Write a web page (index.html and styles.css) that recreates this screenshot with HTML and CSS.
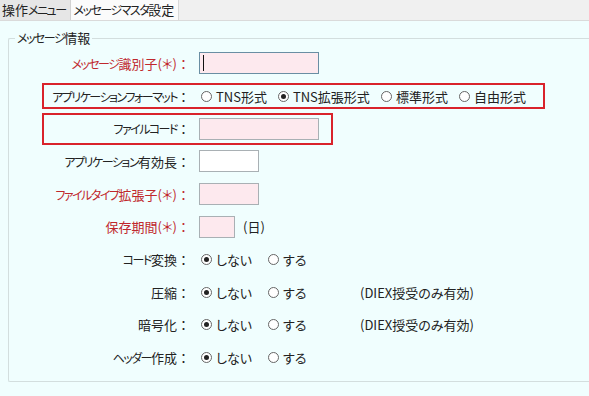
FILE: index.html
```html
<!DOCTYPE html>
<html lang="ja">
<head>
    <meta charset="UTF-8">
    <title>メッセージマスタ設定</title>
    <link rel="stylesheet" href="styles.css">
</head>
<body>
    <div class="tabs">
        <div class="tab">操作<span class="kana">メニュー</span></div>
        <div class="tab active"><span class="kana">メッセージマスタ</span>設定</div>
    </div>

    <div class="panel">
        <fieldset class="box">
            <legend><span class="kana">メッセージ</span>情報</legend>

            <div class="row">
                <label class="lbl req"><span class="kana">メッセージ</span>識別子(＊)<span class="colon">：</span></label>
                <span class="focus"><input type="text" class="txt pink w120 hot"></span>
            </div>

            <!-- annotated rows (red frame) -->
            <div class="row mark mark-fmt">
                <label class="lbl"><span class="kana">アプリケーションフォーマット</span><span class="colon">：</span></label>
                <div class="opts">
                    <label class="opt"><input type="radio" name="fmt">TNS形式</label>
                    <label class="opt"><input type="radio" name="fmt" checked>TNS拡張形式</label>
                    <label class="opt"><input type="radio" name="fmt">標準形式</label>
                    <label class="opt"><input type="radio" name="fmt">自由形式</label>
                </div>
            </div>

            <div class="row mark mark-code">
                <label class="lbl"><span class="kana">ファイルコード</span><span class="colon">：</span></label>
                <input type="text" class="txt pink w120">
            </div>

            <div class="row">
                <label class="lbl"><span class="kana">アプリケーション</span>有効長<span class="colon">：</span></label>
                <input type="text" class="txt w60">
            </div>

            <div class="row">
                <label class="lbl req"><span class="kana">ファイルタイプ</span>拡張子(＊)<span class="colon">：</span></label>
                <input type="text" class="txt pink w60">
            </div>

            <div class="row">
                <label class="lbl req">保存期間(＊)<span class="colon">：</span></label>
                <input type="text" class="txt pink w36">
                <span class="unit">(日)</span>
            </div>

            <div class="row">
                <label class="lbl"><span class="kana">コード</span>変換<span class="colon">：</span></label>
                <div class="opts yn">
                    <label class="opt"><input type="radio" name="conv" checked>しない</label>
                    <label class="opt"><input type="radio" name="conv">する</label>
                </div>
            </div>

            <div class="row">
                <label class="lbl">圧縮<span class="colon">：</span></label>
                <div class="opts yn">
                    <label class="opt"><input type="radio" name="zip" checked>しない</label>
                    <label class="opt"><input type="radio" name="zip">する</label>
                </div>
                <span class="note">(DIEX授受のみ有効)</span>
            </div>

            <div class="row">
                <label class="lbl">暗号化<span class="colon">：</span></label>
                <div class="opts yn">
                    <label class="opt"><input type="radio" name="enc" checked>しない</label>
                    <label class="opt"><input type="radio" name="enc">する</label>
                </div>
                <span class="note">(DIEX授受のみ有効)</span>
            </div>

            <div class="row">
                <label class="lbl"><span class="kana">ヘッダー</span>作成<span class="colon">：</span></label>
                <div class="opts yn">
                    <label class="opt"><input type="radio" name="hdr" checked>しない</label>
                    <label class="opt"><input type="radio" name="hdr">する</label>
                </div>
            </div>
        </fieldset>
    </div>
</body>
</html>
```

FILE: styles.css
```css
html, body {
    margin: 0;
    height: 100%;
}
body {
    font-family: "Noto Sans CJK JP", "Noto Sans", sans-serif;
    font-size: 13px;
    font-feature-settings: "palt";
    color: #222;
    background: #f0fefe;
    overflow: hidden;
}
/* katakana runs are narrow in the original UI font */
.kana {
    font-size: 12px;
    letter-spacing: -1.5px;
}
.colon {
    font-feature-settings: normal;
}
.tabs {
    display: flex;
    height: 20px;
    background: #f0f0f0;
    border-bottom: 1px solid #dadada;
}
.tab {
    padding: 0 4px 0 2px;
    line-height: 20px;
    background: #e6e6e6;
    border-right: 1px solid #d2d2d2;
    white-space: nowrap;
}
.tab.active {
    background: #fbfbfb;
    padding: 0 4px 0 3px;
    border-right: 1px solid #d8d8d8;
}
.panel {
    padding: 8px 0 0 8px;
}
.box {
    margin: 0;
    padding: 0 0 7px 0;
    border: 1px solid #d3dede;
    border-right: none;
    border-radius: 2px 0 0 2px;
}
.box legend {
    margin-left: 6px;
    padding: 0 2px;
    line-height: 18px;
}
.row {
    position: relative;
    display: flex;
    align-items: center;
    height: 32.7px;
}
.lbl {
    width: 181px;
    margin-right: 9px;
    text-align: right;
    white-space: nowrap;
    flex: none;
}
.lbl.req {
    color: #c0282d;
}
.mark::after {
    content: "";
    position: absolute;
    left: 33px;
    border: 2px solid #d9232b;
    box-sizing: border-box;
    pointer-events: none;
}
.mark-fmt::after {
    top: 3px;
    width: 503px;
    height: 26px;
}
.mark-code::after {
    top: 1px;
    width: 291px;
    height: 32px;
}
.txt {
    height: 22px;
    margin: 0;
    padding: 0 4px;
    border: 1px solid #a9b0b4;
    background: #fff;
    box-sizing: border-box;
    font: inherit;
}
.txt.pink {
    background: #fde9ee;
}
.txt.hot {
    border-color: #6a8ea3;
    outline: none;
}
.focus {
    position: relative;
    display: inline-flex;
}
.focus::after {
    content: "";
    position: absolute;
    left: 4px;
    top: 3px;
    width: 1px;
    height: 16px;
    background: #111;
}
.w120 { width: 120px; }
.w60 { width: 60px; }
.w36 { width: 36px; }
.unit {
    margin-left: 8px;
}
.opts {
    display: flex;
    align-items: center;
    gap: 9px;
}
.opt {
    display: inline-flex;
    align-items: center;
    white-space: nowrap;
}
.opt input {
    appearance: none;
    width: 11px;
    height: 11px;
    margin: 0 4px 0 2px;
    border: 1px solid #666;
    border-radius: 50%;
    background: #fff;
    box-sizing: border-box;
    display: grid;
    place-content: center;
}
.opt input:checked::before {
    content: "";
    width: 5px;
    height: 5px;
    border-radius: 50%;
    background: #222;
}
.yn {
    gap: 0;
}
.yn .opt {
    width: 67px;
}
.note {
    margin-left: 27px;
}
```
